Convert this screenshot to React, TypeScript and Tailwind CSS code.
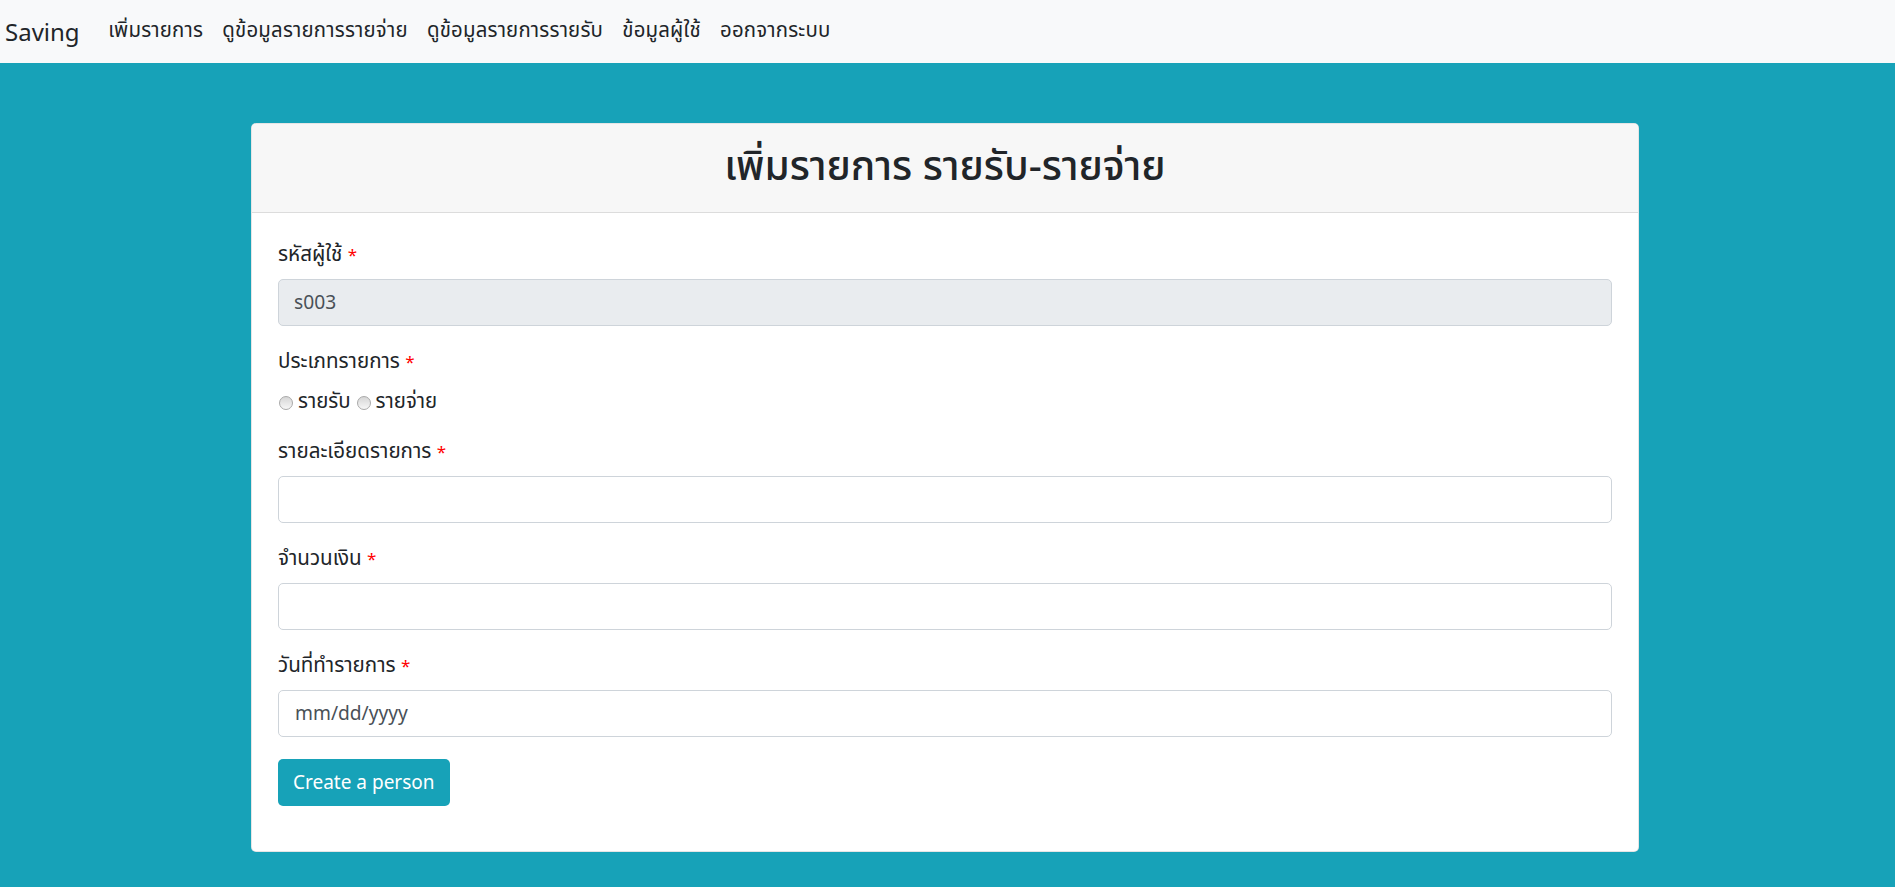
import React from "react";

const thai = "font-['Segoe_UI','Noto_Sans_Thai','Noto_Sans','Open_Sans',sans-serif]";

function Label({ text }: { text: string }) {
  return (
    <div className="h-[31px] pt-[3px] leading-[28px] mb-[10px] text-[20.6px] text-[#212529]">
      {text}{" "}
      <span className="text-[#ff0000] text-[17px] align-top font-['Segoe_UI','Noto_Sans',sans-serif]">*</span>
    </div>
  );
}

function Radio({ label }: { label: string }) {
  return (
    <label className="flex items-center">
      <span className="inline-block w-[14px] h-[14px] rounded-full border border-[#a9a9a9] bg-gradient-to-b from-[#d6d6d6] to-[#f7f7f7] ml-[1px] mr-[5px]" />
      <span className="text-[20.4px] text-[#212529]">{label}</span>
    </label>
  );
}

export default function App() {
  return (
    <div className={`min-h-[887px] bg-[#17a2b8] ${thai}`}>
      <nav className="h-[63px] bg-[#f8f9fa] flex items-center pl-[5px]">
        <span className="text-[24px] text-[#212529] mr-[19px] font-['Segoe_UI','Noto_Sans',sans-serif]">Saving</span>
        <div className="flex items-center text-[20.4px] tracking-[0.2px] text-[#212529]">
          <a className="px-[9.6px]">เพิ่มรายการ</a>
          <a className="px-[9.6px]">ดูข้อมูลรายการรายจ่าย</a>
          <a className="px-[9.6px]">ดูข้อมูลรายการรายรับ</a>
          <a className="px-[9.6px]">ข้อมูลผู้ใช้</a>
          <a className="px-[9.6px]">ออกจากระบบ</a>
        </div>
      </nav>

      <div className="pt-[60px] pb-[36px]">
        <div className="ml-[251px] w-[1388px] bg-white rounded-[5px] border border-black/10 overflow-hidden">
          <div className="h-[89px] bg-[#f7f7f7] border-b border-[#dcdcdc] flex items-center justify-center">
            <h2 className="text-[40.4px] font-medium text-[#212529]">เพิ่มรายการ รายรับ-รายจ่าย</h2>
          </div>
          <div className="px-[26px] pt-[25px] pb-[45px]">
            <div className="mb-[19px]">
              <Label text="รหัสผู้ใช้" />
              <div className="h-[47px] rounded-[5px] border border-[#ced4da] bg-[#e9ecef] flex items-center px-[15px] text-[19.2px] text-[#495057] font-['Segoe_UI','Noto_Sans',sans-serif]">
                s003
              </div>
            </div>
            <div className="mb-[19px]">
              <Label text="ประเภทรายการ" />
              <div className="h-[30px] pt-[3px] flex items-center gap-[5px]">
                <Radio label="รายรับ" />
                <Radio label="รายจ่าย" />
              </div>
            </div>
            <div className="mb-[19px]">
              <Label text="รายละเอียดรายการ" />
              <div className="h-[47px] rounded-[5px] border border-[#ced4da] bg-white" />
            </div>
            <div className="mb-[19px]">
              <Label text="จำนวนเงิน" />
              <div className="h-[47px] rounded-[5px] border border-[#ced4da] bg-white" />
            </div>
            <div className="mb-[22px]">
              <Label text="วันที่ทำรายการ" />
              <div className="h-[47px] rounded-[5px] border border-[#ced4da] bg-white flex items-center pl-[16px] text-[19.2px] text-[#495057] font-['Segoe_UI','Noto_Sans',sans-serif]">
                mm/dd/yyyy
              </div>
            </div>
            <button className="h-[47px] px-[15px] rounded-[5px] bg-[#17a2b8] text-white text-[19px] font-['Segoe_UI','Noto_Sans',sans-serif]">
              Create a person
            </button>
          </div>
        </div>
      </div>
    </div>
  );
}
